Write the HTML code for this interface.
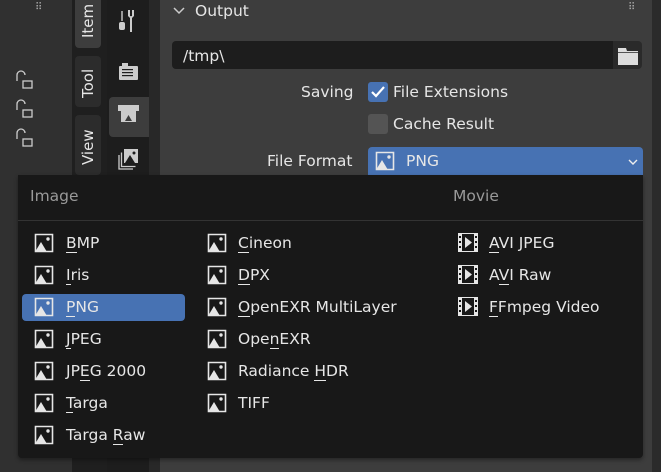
<!DOCTYPE html>
<html><head><style>
body{margin:0;width:661px;height:472px;overflow:hidden;background:#2b2b2b;font-family:"DejaVu Sans","Liberation Sans",sans-serif;font-size:15.5px;color:#e6e6e6;position:relative}
.a{position:absolute}
.t{position:absolute;white-space:nowrap;line-height:20px}
u{text-decoration:none;border-bottom:1px solid #e6e6e6;}
.ic{position:absolute;width:20px;height:20px}
.vt{position:absolute;transform:rotate(-90deg);transform-origin:left top;white-space:nowrap;font-size:15px}
</style></head><body>
<div class="a" style="left:0;top:0;width:74px;height:472px;background:#303030"></div>
<div class="t" style="left:35px;top:-2px;color:#aaa;font-size:10px">⠿</div>
<svg class="a" style="left:14px;top:70px" width="26" height="80" fill="none" stroke="#ccc" stroke-width="1.3">
<g><path d="M3 11 V5 a4 4 0 0 1 8 0"/><rect x="9" y="11" width="9" height="7"/></g>
<g transform="translate(0,29)"><path d="M3 11 V5 a4 4 0 0 1 8 0"/><rect x="9" y="11" width="9" height="7"/></g>
<g transform="translate(0,58)"><path d="M3 11 V5 a4 4 0 0 1 8 0"/><rect x="9" y="11" width="9" height="7"/></g>
</svg>
<div class="a" style="left:72px;top:0;width:35px;height:472px;background:#1f1f1f"></div>
<div class="a" style="left:75px;top:0;width:26px;height:48px;background:#3d3d3d;border-radius:0 0 4px 4px"></div>
<div class="a" style="left:75px;top:56px;width:26px;height:51px;background:#2c2c2c;border-radius:4px"></div>
<div class="a" style="left:75px;top:115px;width:26px;height:60px;background:#2c2c2c;border-radius:4px"></div>
<div class="vt" style="left:79px;top:38px">Item</div>
<div class="vt" style="left:79px;top:98px">Tool</div>
<div class="vt" style="left:79px;top:165px">View</div>
<div class="a" style="left:107px;top:0;width:42px;height:472px;background:#1d1d1d"></div>
<div class="a" style="left:109px;top:97px;width:40px;height:40px;background:#3d3d3d;border-radius:4px 0 0 4px"></div>
<svg class="a" style="left:117px;top:6px" width="24" height="170" fill="#ccc">
<rect x="2" y="16" width="6" height="8" rx="2"/><rect x="4.3" y="5" width="1.4" height="10"/><path d="M13 4 l0 6 a3 3 0 0 0 2 0 V4 h2 v6 l-2 2 v14 h-2 v-14 l-2-2 V4z"/>
<rect x="2" y="60" width="19" height="14" rx="1"/><rect x="5" y="57" width="6" height="3"/><rect x="5" y="63" width="11" height="1.2" fill="#1d1d1d"/><rect x="5" y="66" width="11" height="1.2" fill="#1d1d1d"/><rect x="5" y="69" width="11" height="1.2" fill="#1d1d1d"/>
<rect x="1" y="99" width="21" height="6"/><rect x="4" y="105" width="15" height="11"/><path d="M8 115 l3.5-6 3.5 6z" fill="#3d3d3d"/>
<path d="M2 149 v14 h14" fill="none" stroke="#ccc" stroke-width="1.3"/><path d="M4.5 146.5 v14 h14" fill="none" stroke="#ccc" stroke-width="1.3"/>
<rect x="7" y="143" width="14" height="14"/><path d="M8 157 l5-8 5 8z" fill="#1d1d1d"/><circle cx="17" cy="147" r="1.5" fill="#1d1d1d"/>
</svg>
<div class="a" style="left:149px;top:0;width:11px;height:472px;background:#282828"></div>
<div class="a" style="left:160px;top:0;width:492px;height:472px;background:#3d3d3d"></div>
<div class="a" style="left:652px;top:0;width:9px;height:472px;background:#2b2b2b"></div>
<div class="t" style="left:628px;top:-2px;color:#aaa;font-size:10px">⠿</div>
<svg class="a" style="left:172px;top:5px" width="14" height="12"><path d="M2 3 l5 5 5-5" stroke="#ccc" stroke-width="1.5" fill="none"/></svg>
<div class="t" style="left:195px;top:1px">Output</div>
<div class="a" style="left:172px;top:41px;width:441px;height:28px;background:#1d1d1d;border-radius:4px 0 0 4px"></div>
<div class="t" style="left:183px;top:46px">/tmp\</div>
<div class="a" style="left:613px;top:41px;width:29px;height:28px;background:#2a2a2a;border-radius:0 4px 4px 0"></div>
<svg class="a" style="left:617px;top:46px" width="22" height="20"><path d="M1 2h8l1 3h11v14H1z" fill="#ddd"/><rect x="1" y="6" width="20" height="1" fill="#555"/></svg>
<div class="t" style="left:301px;top:82px">Saving</div>
<div class="a" style="left:368px;top:82px;width:20px;height:20px;background:#4772b3;border-radius:3px"></div>
<svg class="a" style="left:368px;top:82px" width="20" height="20"><path d="M4 10 l4 4 8-9" stroke="#fff" stroke-width="2.2" fill="none"/></svg>
<div class="t" style="left:393px;top:82px">File Extensions</div>
<div class="a" style="left:368px;top:114px;width:20px;height:20px;background:#545454;border-radius:3px"></div>
<div class="t" style="left:393px;top:114px">Cache Result</div>
<div class="t" style="left:267px;top:151px">File Format</div>
<div class="a" style="left:368px;top:147px;width:275px;height:30px;background:#4772b3;border-radius:4px 4px 0 0"></div>
<svg class="ic" style="left:375px;top:151px"><use href="#img"/></svg>
<div class="t" style="left:406px;top:151px">PNG</div>
<svg class="a" style="left:627px;top:157px" width="12" height="10"><path d="M2 3l4 4 4-4" stroke="#eee" stroke-width="1.4" fill="none"/></svg>
<div class="a" style="left:18px;top:175px;width:625px;height:283px;background:#181818;border-radius:0 0 4px 4px;box-shadow:0 2px 4px rgba(0,0,0,.4)"></div>
<div class="t" style="left:30px;top:186px;color:#999">Image</div>
<div class="t" style="left:453px;top:186px;color:#999">Movie</div>
<div class="a" style="left:18px;top:220px;width:625px;height:1px;background:#333"></div>
<div class="a" style="left:22px;top:294px;width:163px;height:27px;background:#4772b3;border-radius:4px"></div>
<svg width="0" height="0" style="position:absolute"><defs>
<g id="img"><path d="M1.5 1.5h17v17h-17z" fill="none" stroke="#e6e6e6" stroke-width="1.6"/><path d="M1 19 L7 9 L13 19z" fill="#e6e6e6"/><circle cx="14" cy="6" r="1.7" fill="#e6e6e6"/></g>
<g id="mov"><rect x="1" y="1" width="20" height="19" fill="#e6e6e6"/><rect x="5" y="2" width="12" height="17" fill="#181818"/><path d="M8 5 L15 10.5 L8 16z" fill="#e6e6e6"/><g fill="#181818"><rect x="2" y="4" width="2" height="2"/><rect x="2" y="9" width="2" height="2"/><rect x="2" y="14" width="2" height="2"/><rect x="18" y="4" width="2" height="2"/><rect x="18" y="9" width="2" height="2"/><rect x="18" y="14" width="2" height="2"/></g></g>
</defs></svg>
<svg class="ic" style="left:34px;top:233px"><use href="#img"/></svg><div class="t" style="left:66px;top:233px"><u>B</u>MP</div>
<svg class="ic" style="left:34px;top:265px"><use href="#img"/></svg><div class="t" style="left:66px;top:265px"><u>I</u>ris</div>
<svg class="ic" style="left:34px;top:297px"><use href="#img"/></svg><div class="t" style="left:66px;top:297px"><u>P</u>NG</div>
<svg class="ic" style="left:34px;top:329px"><use href="#img"/></svg><div class="t" style="left:66px;top:329px"><u>J</u>PEG</div>
<svg class="ic" style="left:34px;top:361px"><use href="#img"/></svg><div class="t" style="left:66px;top:361px">JP<u>E</u>G 2000</div>
<svg class="ic" style="left:34px;top:393px"><use href="#img"/></svg><div class="t" style="left:66px;top:393px"><u>T</u>arga</div>
<svg class="ic" style="left:34px;top:425px"><use href="#img"/></svg><div class="t" style="left:66px;top:425px">Targa <u>R</u>aw</div>
<svg class="ic" style="left:207px;top:233px"><use href="#img"/></svg><div class="t" style="left:238px;top:233px"><u>C</u>ineon</div>
<svg class="ic" style="left:207px;top:265px"><use href="#img"/></svg><div class="t" style="left:238px;top:265px"><u>D</u>PX</div>
<svg class="ic" style="left:207px;top:297px"><use href="#img"/></svg><div class="t" style="left:238px;top:297px"><u>O</u>penEXR MultiLayer</div>
<svg class="ic" style="left:207px;top:329px"><use href="#img"/></svg><div class="t" style="left:238px;top:329px">Ope<u>n</u>EXR</div>
<svg class="ic" style="left:207px;top:361px"><use href="#img"/></svg><div class="t" style="left:238px;top:361px">Radiance <u>H</u>DR</div>
<svg class="ic" style="left:207px;top:393px"><use href="#img"/></svg><div class="t" style="left:238px;top:393px">TIFF</div>
<svg class="a" style="left:457px;top:232px" width="22" height="22"><use href="#mov"/></svg><div class="t" style="left:489px;top:233px"><u>A</u>VI JPEG</div>
<svg class="a" style="left:457px;top:264px" width="22" height="22"><use href="#mov"/></svg><div class="t" style="left:489px;top:265px">A<u>V</u>I Raw</div>
<svg class="a" style="left:457px;top:296px" width="22" height="22"><use href="#mov"/></svg><div class="t" style="left:489px;top:297px"><u>F</u>Fmpeg Video</div>
</body></html>
